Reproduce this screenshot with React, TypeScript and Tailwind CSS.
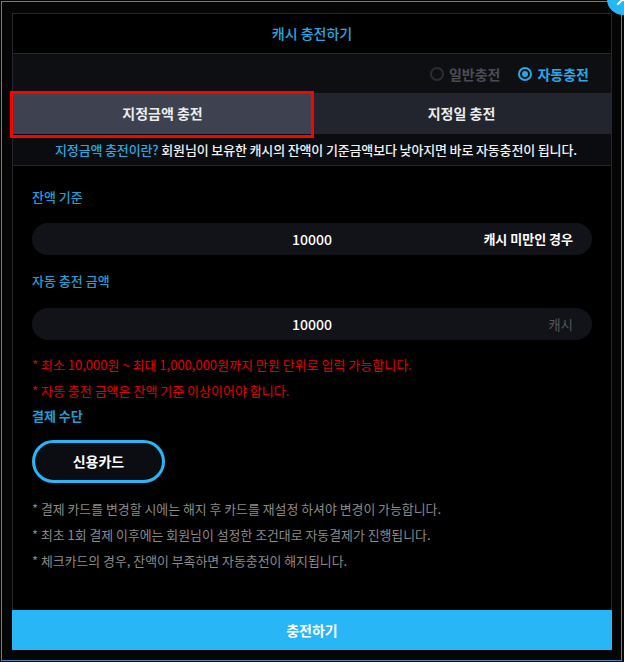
import React, { useState } from "react";

const notesRed = [
  "* 최소 10,000원 ~ 최대 1,000,000원까지 만원 단위로 입력 가능합니다.",
  "* 자동 충전 금액은 잔액 기준 이상이어야 합니다.",
];

const notesGray = [
  "* 결제 카드를 변경할 시에는 해지 후 카드를 재설정 하셔야 변경이 가능합니다.",
  "* 최초 1회 결제 이후에는 회원님이 설정한 조건대로 자동결제가 진행됩니다.",
  "* 체크카드의 경우, 잔액이 부족하면 자동충전이 해지됩니다.",
];

function Radio({ checked, label }: { checked: boolean; label: string }) {
  return (
    <div className="flex items-center gap-[5px]">
      <span
        className={`w-[14px] h-[14px] rounded-full border-2 flex items-center justify-center ${
          checked ? "border-[#2aa8e6]" : "border-[#2c2d33]"
        }`}
      >
        {checked && <span className="w-[6px] h-[6px] rounded-full bg-[#2aa8e6]" />}
      </span>
      <span
        className={`text-[14px] leading-[18px] font-bold ${
          checked ? "text-[#2aa8e6]" : "text-[#4a4c54]"
        }`}
      >
        {label}
      </span>
    </div>
  );
}

export default function App() {
  const [tab, setTab] = useState<"amount" | "date">("amount");

  return (
    <div className="relative w-[624px] h-[662px] overflow-hidden bg-[#050505] pl-px pt-px font-['Noto_Sans_CJK_KR','Noto_Sans',sans-serif]">
      {/* blue frame */}
      <div className="w-[621px] h-[660px] border border-[#3a8bc2] pl-[10px] pt-[11px]">
        <div className="w-[600px] h-[637px] flex flex-col bg-black">
          <div className="flex-1 flex flex-col border-x border-t border-[#26272c]">
            {/* header */}
            <div className="h-[40px] border-b border-[#26272c] flex items-center justify-center">
              <span className="text-[14px] text-[#29a8e0] font-medium">캐시 충전하기</span>
            </div>

            {/* radio row */}
            <div className="h-[39px] bg-[#0e0f13] flex items-center justify-end gap-[18px] pr-[22px]">
              <Radio checked={false} label="일반충전" />
              <Radio checked={true} label="자동충전" />
            </div>

            {/* tabs */}
            <div className="h-[41px] flex">
              <button
                onClick={() => setTab("amount")}
                className={`relative w-[299px] flex items-center justify-center text-[14px] font-bold text-[#ececec] ${
                  tab === "amount" ? "bg-[#3d4150]" : "bg-[#22252d]"
                }`}
              >
                지정금액 충전
                <span className="absolute -left-[3px] -top-[2px] -right-[2px] -bottom-[4px] border-[3px] border-[#ff0000] z-10" />
              </button>
              <button
                onClick={() => setTab("date")}
                className={`flex-1 flex items-center justify-center text-[14px] font-bold text-[#ececec] ${
                  tab === "date" ? "bg-[#3d4150]" : "bg-[#22252d]"
                }`}
              >
                지정일 충전
              </button>
            </div>

            {/* description */}
            <div className="h-[32px] bg-[#0b0c10] border-b border-[#26272c] flex items-center justify-center pl-[8px]">
              <p className="text-[13px] font-medium tracking-[-0.15px] text-[#f2f2f2]">
                <span className="text-[#29a8e0]">지정금액 충전이란?</span> 회원님이 보유한 캐시의 잔액이
                기준금액보다 낮아지면 바로 자동충전이 됩니다.
              </p>
            </div>

            {/* form */}
            <div className="flex-1 flex flex-col px-[19px] pt-[22px]">
              <div className="text-[13px] leading-[18px] font-medium text-[#1f9fd8]">잔액 기준</div>
              <div className="mt-[17px] h-[32px] rounded-full bg-[#121318] flex items-center relative">
                <span className="flex-1 text-center text-[14px] font-medium text-white">10000</span>
                <span className="absolute right-[19px] text-[13px] font-semibold text-white">캐시 미만인 경우</span>
              </div>

              <div className="mt-[17px] text-[13px] leading-[18px] font-medium text-[#1f9fd8]">자동 충전 금액</div>
              <div className="mt-[18px] h-[32px] rounded-full bg-[#121318] flex items-center relative">
                <span className="flex-1 text-center text-[14px] font-medium text-white">10000</span>
                <span className="absolute right-[19px] text-[13.5px] text-[#55565c]">캐시</span>
              </div>

              <div className="mt-[16px] flex flex-col gap-[8px]">
                {notesRed.map((n) => (
                  <p key={n} className="text-[13px] leading-[18px] text-[#e00000]">
                    {n}
                  </p>
                ))}
              </div>

              <div className="mt-[7px] text-[13px] leading-[18px] font-bold text-[#1f9fd8]">결제 수단</div>
              <button className="mt-[15px] w-[133px] h-[43px] rounded-full border-[3px] border-[#29b6f6] bg-[#0c0d12] text-[14px] font-bold text-white">
                신용카드
              </button>

              <div className="mt-[17px] flex flex-col gap-[8px]">
                {notesGray.map((n) => (
                  <p key={n} className="text-[12.9px] leading-[18px] text-[#8a8a8a]">
                    {n}
                  </p>
                ))}
              </div>
            </div>
          </div>

          <button className="h-[40px] shrink-0 bg-[#29b6f6] text-[14px] font-bold text-white">충전하기</button>
        </div>
      </div>

      {/* close button, cut off at the corner */}
      <div className="absolute left-[607px] -top-[17px] w-[32px] h-[32px] rounded-full bg-[#29b6f6] flex items-center justify-center">
        <svg width="16" height="16" viewBox="0 0 16 16" fill="none" stroke="white" strokeWidth="2" strokeLinecap="round">
          <path d="M3 3l10 10M13 3L3 13" />
        </svg>
      </div>
    </div>
  );
}
